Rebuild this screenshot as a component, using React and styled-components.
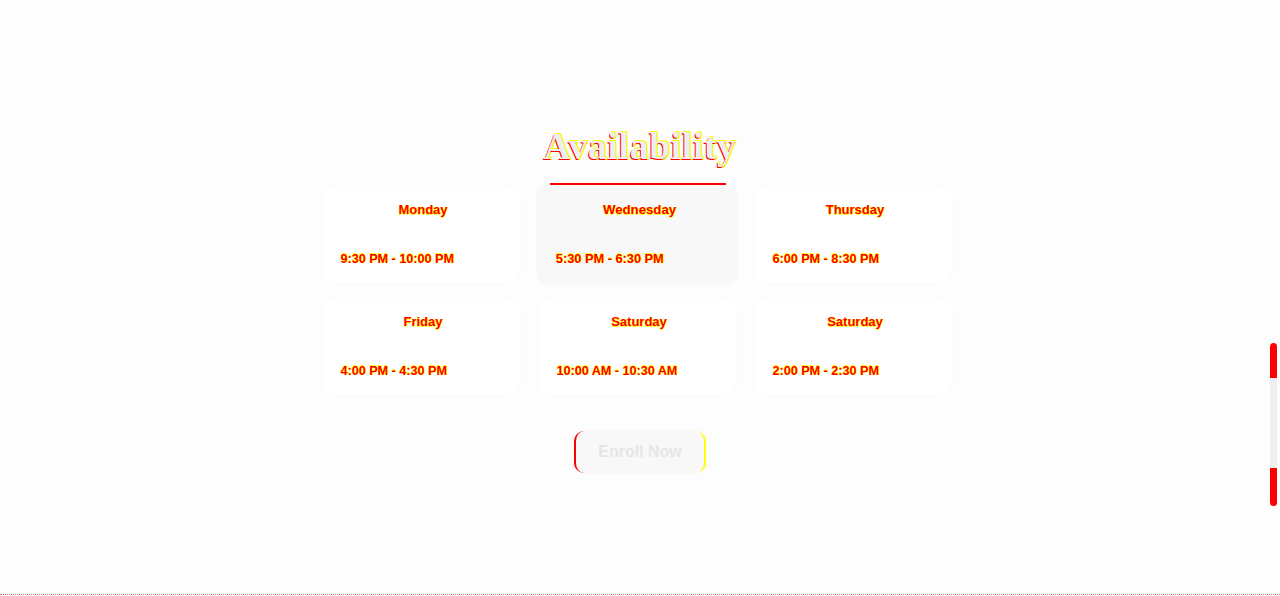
import styled, { createGlobalStyle } from "styled-components";

const Global = createGlobalStyle`
  html, body {
    margin: 0;
    padding: 0;
    background: #fdfdfd;
    font-family: "Liberation Sans", Arial, sans-serif;
  }
`;

const Page = styled.div`
  height: 596px;
  position: relative;
  overflow: hidden;
  display: flex;
  flex-direction: column;
  align-items: center;
  padding-top: 122px;
  box-sizing: border-box;
`;

const Title = styled.h1`
  margin: 0;
  font-family: "Liberation Serif", "Times New Roman", serif;
  font-size: 38px;
  font-weight: bold;
  letter-spacing: 0.5px;
  color: #eeeeee;
  text-shadow: -1px 1px 0 #ff0000, 1px -1px 0 #ffff00, 1px 1px 0 #ffff00;
  line-height: 48px;
`;

const Underline = styled.div`
  position: relative;
  z-index: 1;
  width: 176px;
  height: 2px;
  background: #ff0000;
  margin-top: 13px;
  margin-left: -4px;
`;

const Grid = styled.div`
  display: grid;
  grid-template-columns: repeat(3, 197px);
  column-gap: 19px;
  row-gap: 14px;
  margin-left: -6px;
`;

const Card = styled.div`
  height: 98px;
  border-radius: 12px;
  background: ${(p) => (p.$active ? "#f8f8f8" : "#ffffff")};
  box-shadow: 0 0 3px rgba(0, 0, 0, 0.03);
  transform: ${(p) => (p.$active ? "scale(1.015)" : "none")};
  display: flex;
  flex-direction: column;
  padding: 17px 14px 0 18px;
  box-sizing: border-box;
`;

const Day = styled.div`
  text-align: center;
  font-size: 13px;
  font-weight: bold;
  color: #ff0000;
  text-shadow: 1px 0 0 #ffff00, 0 1px 0 #ffff00;
`;

const Time = styled.div`
  margin-top: 35px;
  font-size: 12.6px;
  font-weight: bold;
  color: #ff0000;
  text-shadow: 1px 0 0 #ffff00, 0 -1px 0 #ffff00;
`;

const Button = styled.button`
  margin-top: 36px;
  width: 132px;
  height: 42px;
  border-radius: 10px;
  border: none;
  border-left: 2px solid #ff0000;
  border-right: 2px solid #ffff00;
  background: #f8f8f8;
  color: #e6e6e6;
  font-family: "Liberation Sans", Arial, sans-serif;
  font-weight: bold;
  font-size: 16px;
`;

const Scrollbar = styled.div`
  position: absolute;
  right: 3px;
  top: 343px;
  width: 7px;
  height: 163px;
  border-radius: 4px;
  overflow: hidden;
  display: flex;
  flex-direction: column;
`;

const Segment = styled.div`
  background: ${(p) => p.$c};
  height: ${(p) => p.$h}px;
`;

const Dotted = styled.div`
  position: absolute;
  left: 0;
  right: 0;
  bottom: 1px;
  height: 1px;
  border-bottom: 1px dotted #ff0000;
  opacity: 0.6;
`;

const slots = [
  { day: "Monday", time: "9:30 PM - 10:00 PM" },
  { day: "Wednesday", time: "5:30 PM - 6:30 PM", active: true },
  { day: "Thursday", time: "6:00 PM - 8:30 PM" },
  { day: "Friday", time: "4:00 PM - 4:30 PM" },
  { day: "Saturday", time: "10:00 AM - 10:30 AM" },
  { day: "Saturday", time: "2:00 PM - 2:30 PM" },
];

export default function App() {
  return (
    <>
      <Global />
      <Page>
        <Title>Availability</Title>
        <Underline />
        <Grid>
          {slots.map((s, i) => (
            <Card key={i} $active={s.active}>
              <Day>{s.day}</Day>
              <Time>{s.time}</Time>
            </Card>
          ))}
        </Grid>
        <Button>Enroll Now</Button>
        <Scrollbar>
          <Segment $c="#ff0000" $h={35} />
          <Segment $c="#efefef" $h={90} />
          <Segment $c="#ff0000" $h={38} />
        </Scrollbar>
        <Dotted />
      </Page>
    </>
  );
}
